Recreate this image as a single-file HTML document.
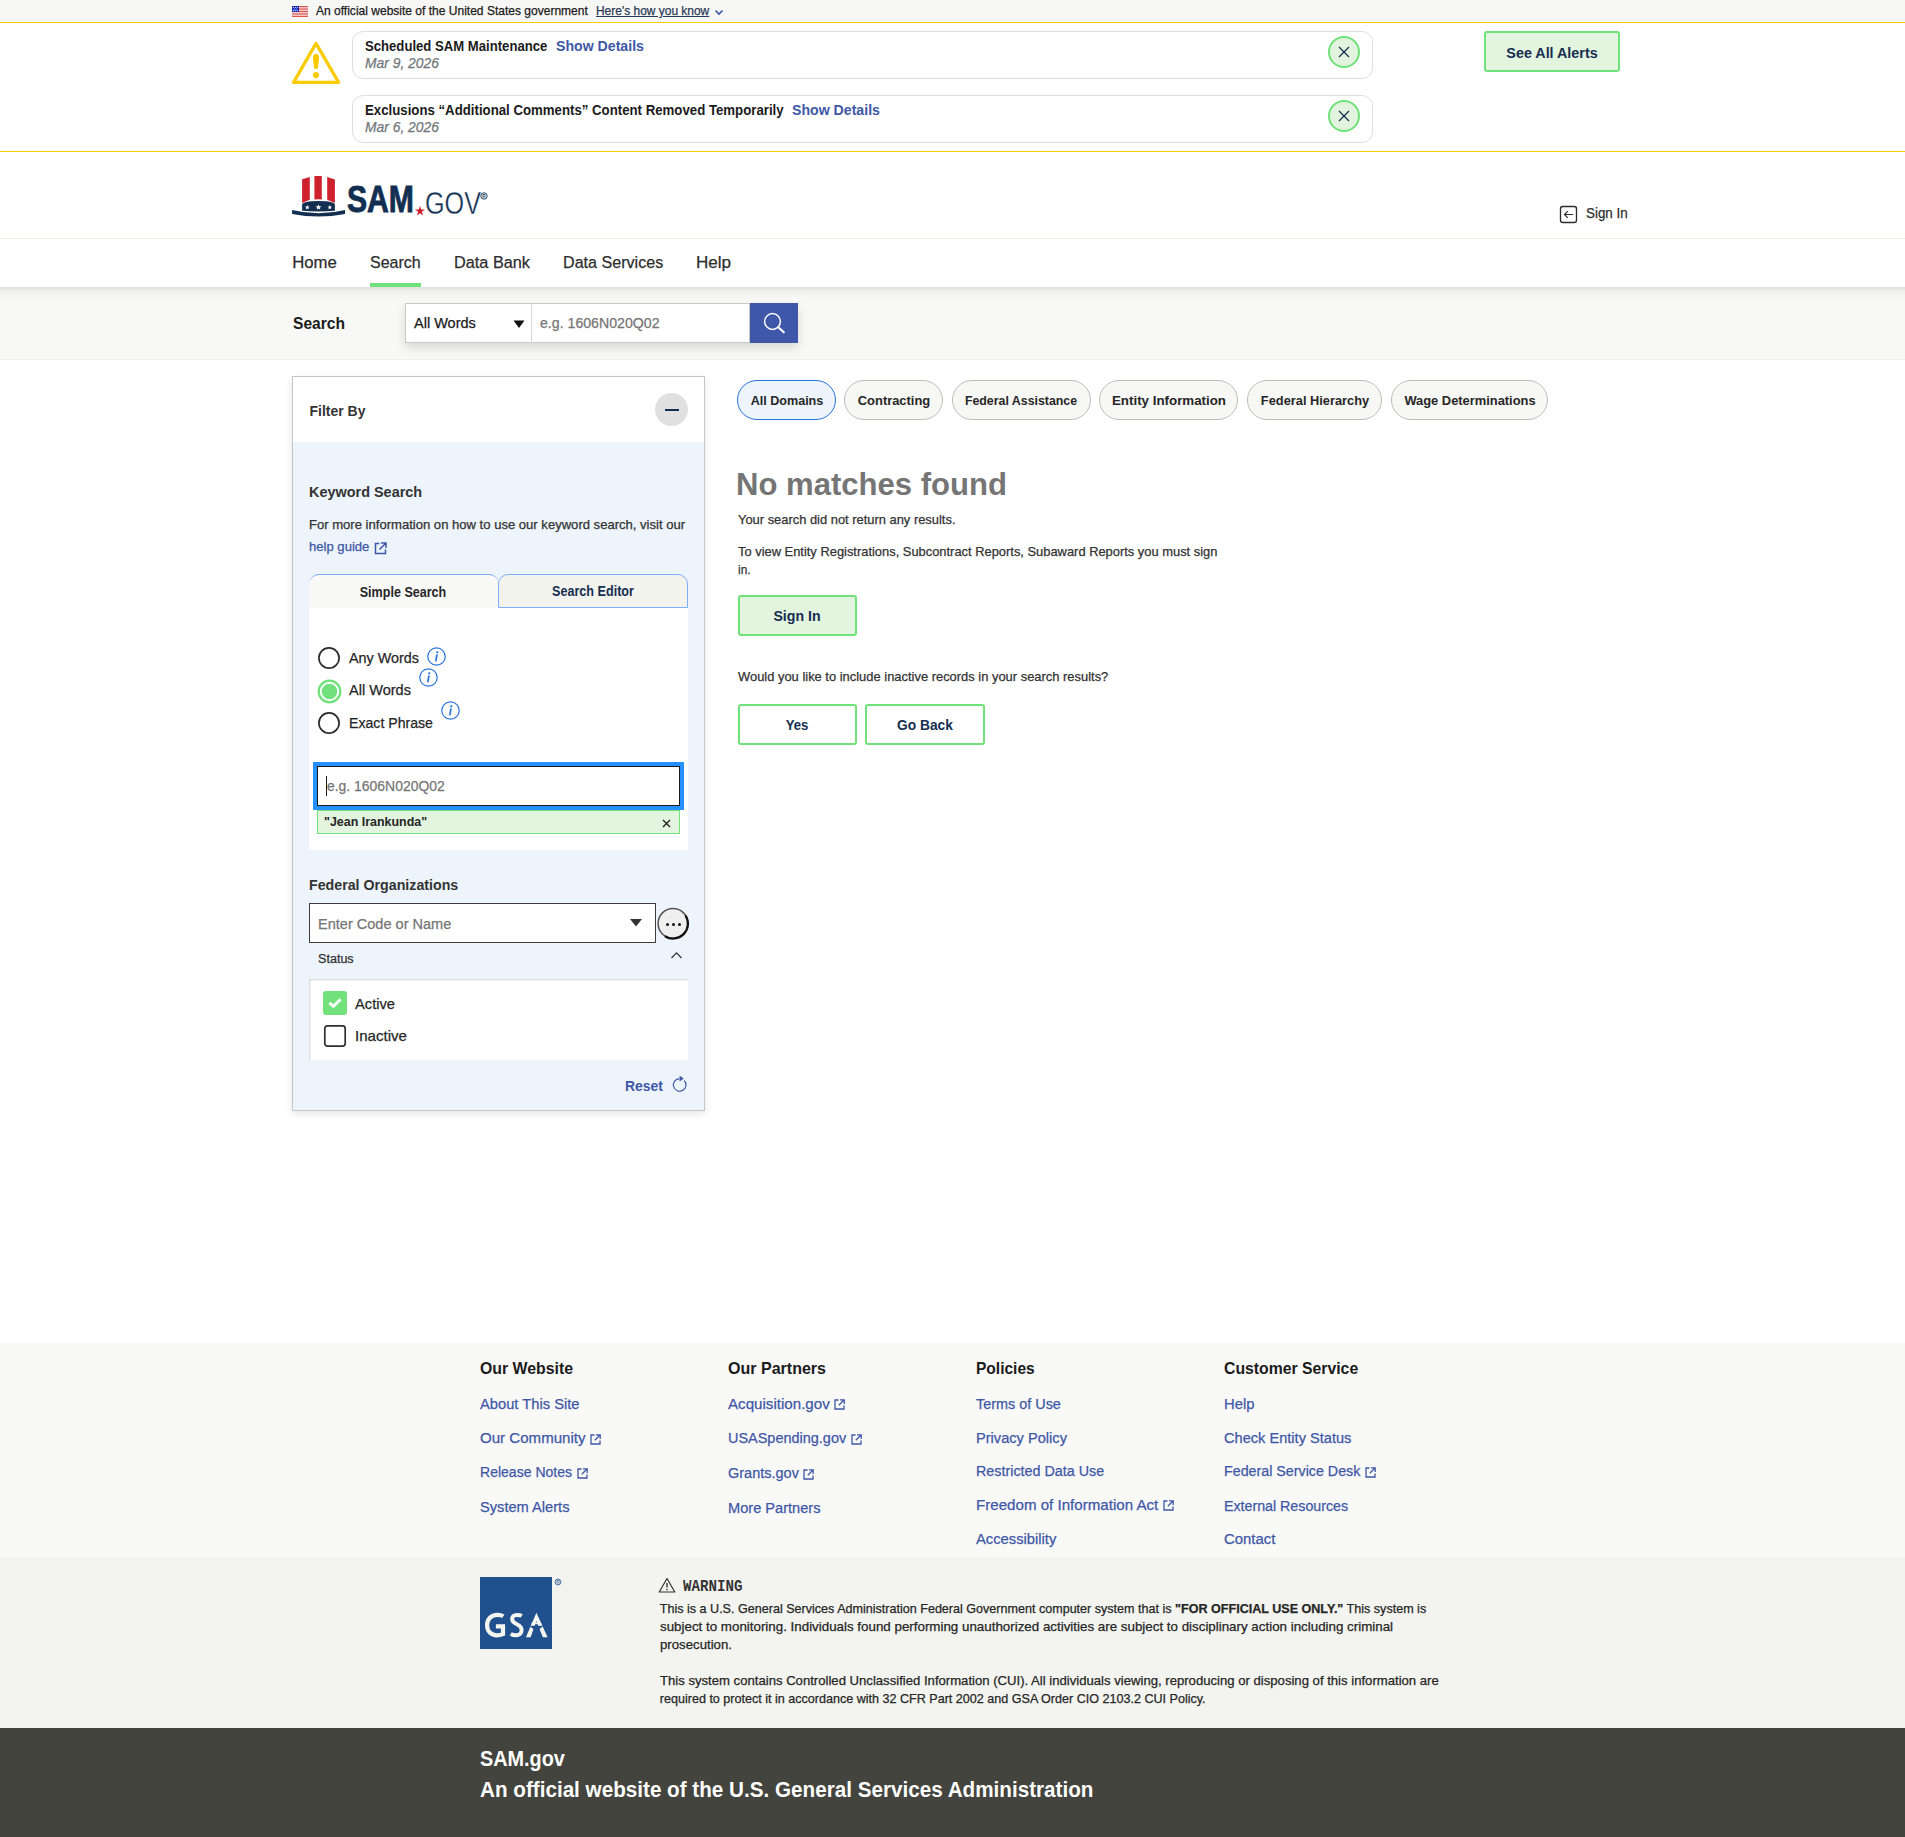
<!DOCTYPE html>
<html><head><meta charset="utf-8"><title>SAM.gov Search</title>
<style>
html,body{margin:0;padding:0;background:#fff;}
body{position:relative;width:1905px;height:1837px;overflow:hidden;font-family:"Liberation Sans",sans-serif;}
.t{position:absolute;white-space:nowrap;font-family:"Liberation Sans",sans-serif;-webkit-text-stroke:0.25px currentColor;}
.b{position:absolute;}
b{font-weight:bold;}
</style></head><body>
<div class="b" style="left:0px;top:0px;width:1905px;height:22px;background:#f7f7f5"></div>
<div class="b" style="left:0px;top:22px;width:1905px;height:1px;background:#f9cb00"></div>
<svg class="b" style="left:292px;top:6px" width="16" height="11" viewBox="0 0 16 11"><rect width="16" height="11" fill="#fff"/><rect y="0.00" width="16" height="0.85" fill="#d83933"/><rect y="1.69" width="16" height="0.85" fill="#d83933"/><rect y="3.38" width="16" height="0.85" fill="#d83933"/><rect y="5.07" width="16" height="0.85" fill="#d83933"/><rect y="6.76" width="16" height="0.85" fill="#d83933"/><rect y="8.45" width="16" height="0.85" fill="#d83933"/><rect y="10.14" width="16" height="0.85" fill="#d83933"/><rect width="7" height="6" fill="#0b1fb5"/><circle cx="1.3" cy="1.3" r="0.6" fill="#fff"/><circle cx="3.3" cy="1.3" r="0.6" fill="#fff"/><circle cx="5.3" cy="1.3" r="0.6" fill="#fff"/><circle cx="2.3" cy="3" r="0.6" fill="#fff"/><circle cx="4.3" cy="3" r="0.6" fill="#fff"/><circle cx="1.3" cy="4.7" r="0.6" fill="#fff"/><circle cx="3.3" cy="4.7" r="0.6" fill="#fff"/><circle cx="5.3" cy="4.7" r="0.6" fill="#fff"/></svg>
<div class="t" style="left:316px;top:3.31px;font-size:12.43px;line-height:16.16px;font-weight:normal;color:#1b1b1b;font-style:normal;transform:scaleX(0.9680);transform-origin:left;">An official website of the United States government</div>
<div class="t" style="left:595.7px;top:3.31px;font-size:12.43px;line-height:16.16px;font-weight:normal;color:#2b3a55;font-style:normal;transform:scaleX(0.9608);transform-origin:left;text-decoration:underline;">Here’s how you know</div>
<svg class="b" style="left:714px;top:8px" width="10" height="8" viewBox="0 0 10 8"><path d="M1.5 2.5 L5 6 L8.5 2.5" fill="none" stroke="#3e57a6" stroke-width="1.6"/></svg>
<div class="b" style="left:0px;top:151px;width:1905px;height:1px;background:#f9cb00"></div>
<svg class="b" style="left:292px;top:41px" width="49" height="44" viewBox="0 0 49 44"><path d="M24 2.4 L46.6 41.4 L1.6 41.4 Z" fill="none" stroke="#f9cb00" stroke-width="3.2" stroke-linejoin="round"/><path d="M20.9 17.3 Q20.9 12.8 24 12.8 Q27.1 12.8 27.1 17.3 L26 26.4 Q25.8 28.1 24 28.1 Q22.2 28.1 22 26.4 Z" fill="#f9cb00"/><circle cx="23.95" cy="34.05" r="3.1" fill="#f9cb00"/></svg>
<div class="b" style="left:352px;top:31px;width:1021px;height:48px;box-sizing:border-box;border:1px solid #dcdee0;border-radius:11px;background:#fff"></div>
<div class="t" style="left:365px;top:37.08px;font-size:13.966px;line-height:18.16px;font-weight:bold;color:#1b1b1b;font-style:normal;-webkit-text-stroke:0;transform:scaleX(0.9406);transform-origin:left;">Scheduled SAM Maintenance</div>
<div class="t" style="left:556px;top:37.08px;font-size:13.966px;line-height:18.16px;font-weight:bold;color:#3e57a6;font-style:normal;-webkit-text-stroke:0;transform:scaleX(1.0124);transform-origin:left;">Show Details</div>
<div class="t" style="left:365px;top:54.47px;font-size:14.385px;line-height:18.7px;font-weight:normal;color:#71767a;font-style:italic;transform:scaleX(0.9639);transform-origin:left;">Mar 9, 2026</div>
<div class="b" style="left:1328px;top:36px;width:32px;height:32px;box-sizing:border-box;border:2px solid #70e17b;border-radius:50%;background:#e3f4df"></div>
<svg class="b" style="left:1338px;top:46px" width="12" height="12" viewBox="0 0 12 12"><path d="M1 1 L11 11 M11 1 L1 11" stroke="#162e51" stroke-width="1.3"/></svg>
<div class="b" style="left:352px;top:95px;width:1021px;height:48px;box-sizing:border-box;border:1px solid #dcdee0;border-radius:11px;background:#fff"></div>
<div class="t" style="left:365px;top:101.08px;font-size:13.966px;line-height:18.16px;font-weight:bold;color:#1b1b1b;font-style:normal;-webkit-text-stroke:0;transform:scaleX(0.9478);transform-origin:left;">Exclusions “Additional Comments” Content Removed Temporarily</div>
<div class="t" style="left:792.3px;top:101.08px;font-size:13.966px;line-height:18.16px;font-weight:bold;color:#3e57a6;font-style:normal;-webkit-text-stroke:0;transform:scaleX(1.0124);transform-origin:left;">Show Details</div>
<div class="t" style="left:365px;top:118.47px;font-size:14.385px;line-height:18.7px;font-weight:normal;color:#71767a;font-style:italic;transform:scaleX(0.9639);transform-origin:left;">Mar 6, 2026</div>
<div class="b" style="left:1328px;top:100px;width:32px;height:32px;box-sizing:border-box;border:2px solid #70e17b;border-radius:50%;background:#e3f4df"></div>
<svg class="b" style="left:1338px;top:110px" width="12" height="12" viewBox="0 0 12 12"><path d="M1 1 L11 11 M11 1 L1 11" stroke="#162e51" stroke-width="1.3"/></svg>
<div class="b" style="left:1484px;top:31px;width:136px;height:41px;box-sizing:border-box;border:2px solid #70e17b;border-radius:3px;background:#e3f4df"></div>
<div class="t" style="left:1152.2px;width:800px;text-align:center;top:43.73px;font-size:14.525px;line-height:18.88px;font-weight:bold;color:#162e51;font-style:normal;-webkit-text-stroke:0;transform:scaleX(0.9863);transform-origin:center;">See All Alerts</div>
<div class="b" style="left:0px;top:238px;width:1905px;height:1px;background:#f0f0ea"></div>
<svg class="b" style="left:292px;top:175px" width="54" height="42" viewBox="0 0 54 42"><path d="M10.1 4.2 L17.8 2.0 L17.8 24.7 L10.1 27.9 Z" fill="#cf202e"/><path d="M22.4 1.1 L29.8 1.1 L29.8 24.4 Q26.1 24.1 22.4 24.4 Z" fill="#cf202e"/><path d="M35.2 2.0 L42.9 4.6 L42.9 27.9 L35.2 24.7 Z" fill="#cf202e"/><path d="M10.1 29.8 Q10.8 26.1 26.5 26.1 Q42.2 26.1 42.9 29.8 L42.9 35.7 Q26.5 37.2 10.1 35.7 Z" fill="#122f52"/><polygon points="15.30,29.90 15.92,31.55 17.68,31.63 16.30,32.72 16.77,34.42 15.30,33.45 13.83,34.42 14.30,32.72 12.92,31.63 14.68,31.55" fill="#fff"/><polygon points="26.50,29.20 27.27,31.25 29.45,31.34 27.74,32.70 28.32,34.81 26.50,33.60 24.68,34.81 25.26,32.70 23.55,31.34 25.73,31.25" fill="#fff"/><polygon points="37.80,30.00 38.39,31.58 40.08,31.66 38.76,32.71 39.21,34.34 37.80,33.41 36.39,34.34 36.84,32.71 35.52,31.66 37.21,31.58" fill="#fff"/><path d="M0.1 34.9 Q26.5 41.5 53 34.9 L53 38.9 Q26.5 44 0.1 38.9 Z" fill="#122f52"/></svg>
<div class="t" style="left:347px;top:175.12px;font-size:37.709px;line-height:49.02px;font-weight:bold;color:#122f52;font-style:normal;-webkit-text-stroke:0;transform:scaleX(0.7995);transform-origin:left;-webkit-text-stroke:0.9px #122f52;">SAM</div>
<svg class="b" style="left:414.5px;top:205.5px" width="10" height="10" viewBox="0 0 10 10"><polygon points="5,0 6.2,3.6 10,3.6 6.9,5.8 8.1,9.5 5,7.2 1.9,9.5 3.1,5.8 0,3.6 3.8,3.6" fill="#cf202e"/></svg>
<div class="t" style="left:424.5px;top:182.55px;font-size:31.564px;line-height:41.03px;font-weight:normal;color:#122f52;font-style:normal;transform:scaleX(0.7982);transform-origin:left;-webkit-text-stroke:0.35px #fff;">GOV</div>
<svg class="b" style="left:480px;top:192px" width="8" height="8" viewBox="0 0 8 8"><circle cx="4" cy="4" r="3.2" fill="none" stroke="#122f52" stroke-width="0.9"/><text x="4" y="5.6" font-size="4.6" text-anchor="middle" fill="#122f52" font-family="Liberation Sans" font-weight="bold">R</text></svg>
<svg class="b" style="left:1559px;top:205px" width="19" height="19" viewBox="0 0 19 19"><rect x="1.5" y="1.5" width="16" height="16" rx="2.2" fill="none" stroke="#2d2d2d" stroke-width="1.35"/><path d="M14.2 9.5 H5.5 M8.8 6.2 L5.5 9.5 L8.8 12.8" fill="none" stroke="#2d2d2d" stroke-width="1.2"/></svg>
<div class="t" style="left:1586px;top:203.07px;font-size:15.084px;line-height:19.61px;font-weight:normal;color:#2d2d2d;font-style:normal;transform:scaleX(0.8859);transform-origin:left;">Sign In</div>
<div class="t" style="left:292.2px;top:252.10px;font-size:16.76px;line-height:21.79px;font-weight:normal;color:#2e2e2e;font-style:normal;">Home</div>
<div class="t" style="left:370px;top:252.10px;font-size:16.76px;line-height:21.79px;font-weight:normal;color:#2e2e2e;font-style:normal;transform:scaleX(0.9547);transform-origin:left;">Search</div>
<div class="t" style="left:454px;top:252.10px;font-size:16.76px;line-height:21.79px;font-weight:normal;color:#2e2e2e;font-style:normal;transform:scaleX(0.9711);transform-origin:left;">Data Bank</div>
<div class="t" style="left:562.7px;top:252.10px;font-size:16.76px;line-height:21.79px;font-weight:normal;color:#2e2e2e;font-style:normal;transform:scaleX(0.9614);transform-origin:left;">Data Services</div>
<div class="t" style="left:695.5px;top:252.10px;font-size:16.76px;line-height:21.79px;font-weight:normal;color:#2e2e2e;font-style:normal;transform:scaleX(1.0183);transform-origin:left;">Help</div>
<div class="b" style="left:370px;top:283px;width:51px;height:4px;background:#70e17b"></div>
<div class="b" style="left:0px;top:287px;width:1905px;height:72px;background:linear-gradient(to bottom,#dfdfdd 0px,#ebebe9 3px,#f4f4f2 7px,#f8f8f6 13px,#f8f8f6 100%)"></div>
<div class="b" style="left:0px;top:359px;width:1905px;height:1px;background:#f0f0eb"></div>
<div class="t" style="left:292.7px;top:312.59px;font-size:16.061px;line-height:20.88px;font-weight:bold;color:#1b1b1b;font-style:normal;-webkit-text-stroke:0;transform:scaleX(0.9706);transform-origin:left;">Search</div>
<div class="b" style="left:405px;top:303px;width:393px;height:40px;box-shadow:0 5px 10px rgba(0,0,0,0.13)"></div>
<div class="b" style="left:405px;top:303px;width:127px;height:40px;box-sizing:border-box;border:1px solid #c9c9c9;background:#fff"></div>
<div class="t" style="left:414px;top:313.99px;font-size:14.665px;line-height:19.06px;font-weight:normal;color:#1b1b1b;font-style:normal;transform:scaleX(0.9908);transform-origin:left;">All Words</div>
<svg class="b" style="left:513px;top:320px" width="12" height="9" viewBox="0 0 12 9"><path d="M0.5 0.5 H11.5 L6 8 Z" fill="#111"/></svg>
<div class="b" style="left:531px;top:303px;width:219px;height:40px;box-sizing:border-box;border:1px solid #c9c9c9;border-left:1px solid #d6d6d6;background:#fff"></div>
<div class="t" style="left:540.4px;top:314.19px;font-size:14.665px;line-height:19.06px;font-weight:normal;color:#757575;font-style:normal;transform:scaleX(0.9650);transform-origin:left;">e.g. 1606N020Q02</div>
<div class="b" style="left:750px;top:303px;width:48px;height:40px;background:#3f57a8"></div>
<svg class="b" style="left:760px;top:309px" width="28" height="28" viewBox="0 0 28 28"><circle cx="12.5" cy="12.5" r="7.9" fill="none" stroke="#fff" stroke-width="1.5"/><path d="M18.3 18.3 L23.8 23.3" stroke="#fff" stroke-width="2.2" stroke-linecap="round"/></svg>
<div class="b" style="left:292px;top:376px;width:413px;height:735px;box-sizing:border-box;border:1px solid #c6c6c6;background:#edf4fb;box-shadow:0 3px 8px rgba(0,0,0,0.10)"></div>
<div class="b" style="left:293px;top:377px;width:411px;height:65px;background:#fff"></div>
<div class="t" style="left:309.6px;top:402.08px;font-size:13.966px;line-height:18.16px;font-weight:bold;color:#333333;font-style:normal;-webkit-text-stroke:0;">Filter By</div>
<div class="b" style="left:655px;top:393px;width:33px;height:33px;border-radius:50%;background:#e0e0e0"></div>
<div class="b" style="left:665px;top:409px;width:14px;height:1.5px;background:#112e51"></div>
<div class="t" style="left:309.4px;top:483.23px;font-size:14.525px;line-height:18.88px;font-weight:bold;color:#333333;font-style:normal;-webkit-text-stroke:0;transform:scaleX(0.9945);transform-origin:left;">Keyword Search</div>
<div class="t" style="left:309.4px;top:518.35px;font-size:12.291px;line-height:15.98px;font-weight:normal;color:#333333;font-style:normal;transform:scaleX(1.0637);transform-origin:left;">For more information on how to use our keyword search, visit our</div>
<div class="t" style="left:309.4px;top:540.35px;font-size:12.291px;line-height:15.98px;font-weight:normal;color:#3e57a6;font-style:normal;transform:scaleX(1.0648);transform-origin:left;">help guide</div>
<svg class="b" style="left:374px;top:542px" width="14" height="13" viewBox="0 0 14 13"><path d="M5.5 1.5 H1.5 V11.5 H11.5 V7.5" fill="none" stroke="#3e57a6" stroke-width="1.5"/><path d="M7 1 H12 V6 M12 1 L5.5 7.5" fill="none" stroke="#3e57a6" stroke-width="1.5"/></svg>
<div class="b" style="left:309px;top:608px;width:379px;height:242px;background:#fff"></div>
<div class="b" style="left:309px;top:574px;width:190px;height:34px;box-sizing:border-box;border-top:1px solid #7eaef8;border-radius:10px 10px 0 0;background:#f9f9f7"></div>
<div class="b" style="left:498px;top:574px;width:190px;height:34px;box-sizing:border-box;border:1px solid #7eaef8;border-radius:10px 10px 0 0;background:#f3f3ee"></div>
<div class="t" style="left:3.1000000000000227px;width:800px;text-align:center;top:583.08px;font-size:13.966px;line-height:18.16px;font-weight:bold;color:#262626;font-style:normal;-webkit-text-stroke:0;transform:scaleX(0.8997);transform-origin:center;">Simple Search</div>
<div class="t" style="left:193px;width:800px;text-align:center;top:582.08px;font-size:13.966px;line-height:18.16px;font-weight:bold;color:#162e51;font-style:normal;-webkit-text-stroke:0;transform:scaleX(0.9030);transform-origin:center;">Search Editor</div>
<svg class="b" style="left:317px;top:646px" width="24" height="24" viewBox="0 0 24 24"><circle cx="12" cy="12" r="10.1" fill="#fff" stroke="#2b2b2b" stroke-width="1.7"/></svg>
<div class="t" style="left:349.2px;top:647.99px;font-size:15.363px;line-height:19.97px;font-weight:normal;color:#262626;font-style:normal;transform:scaleX(0.9352);transform-origin:left;">Any Words</div>
<svg class="b" style="left:426.5px;top:646.5px" width="19" height="19" viewBox="0 0 19 19"><circle cx="9.5" cy="9.5" r="8.7" fill="none" stroke="#2672de" stroke-width="1.2"/><circle cx="10.3" cy="5.3" r="1.15" fill="#2672de"/><path d="M9.9 8 L8.9 13.6" stroke="#2672de" stroke-width="1.7" stroke-linecap="round"/></svg>
<svg class="b" style="left:317px;top:679.0px" width="25" height="25" viewBox="0 0 25 25"><circle cx="12.5" cy="12.5" r="10.8" fill="#fff" stroke="#70e17b" stroke-width="2.2"/><circle cx="12.5" cy="12.5" r="7.8" fill="#70e17b"/></svg>
<div class="t" style="left:349.2px;top:680.49px;font-size:15.363px;line-height:19.97px;font-weight:normal;color:#262626;font-style:normal;transform:scaleX(0.9473);transform-origin:left;">All Words</div>
<svg class="b" style="left:418.5px;top:667.5px" width="19" height="19" viewBox="0 0 19 19"><circle cx="9.5" cy="9.5" r="8.7" fill="none" stroke="#2672de" stroke-width="1.2"/><circle cx="10.3" cy="5.3" r="1.15" fill="#2672de"/><path d="M9.9 8 L8.9 13.6" stroke="#2672de" stroke-width="1.7" stroke-linecap="round"/></svg>
<svg class="b" style="left:317px;top:711px" width="24" height="24" viewBox="0 0 24 24"><circle cx="12" cy="12" r="10.1" fill="#fff" stroke="#2b2b2b" stroke-width="1.7"/></svg>
<div class="t" style="left:349.2px;top:712.99px;font-size:15.363px;line-height:19.97px;font-weight:normal;color:#262626;font-style:normal;transform:scaleX(0.9193);transform-origin:left;">Exact Phrase</div>
<svg class="b" style="left:440.5px;top:700.5px" width="19" height="19" viewBox="0 0 19 19"><circle cx="9.5" cy="9.5" r="8.7" fill="none" stroke="#2672de" stroke-width="1.2"/><circle cx="10.3" cy="5.3" r="1.15" fill="#2672de"/><path d="M9.9 8 L8.9 13.6" stroke="#2672de" stroke-width="1.7" stroke-linecap="round"/></svg>
<div class="b" style="left:313px;top:762px;width:371px;height:48px;background:#2491ff"></div>
<div class="b" style="left:317px;top:766px;width:363px;height:40px;box-sizing:border-box;border:1px solid #1b1b1b;background:#fff"></div>
<div class="b" style="left:326px;top:776px;width:1.3px;height:20px;background:#1b1b1b"></div>
<div class="t" style="left:327px;top:776.99px;font-size:14.665px;line-height:19.06px;font-weight:normal;color:#757575;font-style:normal;transform:scaleX(0.9505);transform-origin:left;">e.g. 1606N020Q02</div>
<div class="b" style="left:317px;top:810px;width:363px;height:24px;box-sizing:border-box;border:1px solid #70e17b;background:#e3f4df"></div>
<div class="t" style="left:323.5px;top:813.95px;font-size:12.989px;line-height:16.89px;font-weight:bold;color:#262626;font-style:normal;-webkit-text-stroke:0;transform:scaleX(0.9600);transform-origin:left;">"Jean Irankunda"</div>
<svg class="b" style="left:662px;top:819px" width="9" height="9" viewBox="0 0 9 9"><path d="M1 1 L8 8 M8 1 L1 8" stroke="#1b1b1b" stroke-width="1.3"/></svg>
<div class="t" style="left:309.4px;top:874.97px;font-size:15.084px;line-height:19.61px;font-weight:bold;color:#333333;font-style:normal;-webkit-text-stroke:0;transform:scaleX(0.9424);transform-origin:left;">Federal Organizations</div>
<div class="b" style="left:309px;top:903px;width:347px;height:40px;box-sizing:border-box;border:1px solid #3d3d3d;background:#fff"></div>
<div class="t" style="left:318.4px;top:913.69px;font-size:15.363px;line-height:19.97px;font-weight:normal;color:#757575;font-style:normal;transform:scaleX(0.9461);transform-origin:left;">Enter Code or Name</div>
<svg class="b" style="left:629px;top:918px" width="14" height="10" viewBox="0 0 14 10"><path d="M1 1 H13 L7 8.5 Z" fill="#333"/></svg>
<svg class="b" style="left:655.5px;top:905.5px" width="34" height="35" viewBox="0 0 34 35"><circle cx="17" cy="17.4" r="14.9" fill="#efefef" stroke="#555" stroke-width="1.5"/><path d="M29.5 9.5 A14.9 14.9 0 0 1 9 30.2" fill="none" stroke="#111" stroke-width="2.2"/></svg>
<div class="b" style="left:666.0px;top:922.5px;width:3px;height:3px;border-radius:50%;background:#111"></div>
<div class="b" style="left:671.7px;top:922.5px;width:3px;height:3px;border-radius:50%;background:#111"></div>
<div class="b" style="left:677.5px;top:922.5px;width:3px;height:3px;border-radius:50%;background:#111"></div>
<div class="t" style="left:317.7px;top:951.87px;font-size:11.872px;line-height:15.43px;font-weight:normal;color:#333333;font-style:normal;transform:scaleX(1.0607);transform-origin:left;">Status</div>
<svg class="b" style="left:670px;top:950px" width="13" height="10" viewBox="0 0 13 10"><path d="M1.5 8 L6.5 2.8 L11.5 8" fill="none" stroke="#333" stroke-width="1.2"/></svg>
<div class="b" style="left:309px;top:979px;width:379px;height:81px;background:#fff;box-shadow:inset 1px 1px 2px rgba(0,0,0,0.18)"></div>
<div class="b" style="left:323px;top:991px;width:24px;height:24px;border-radius:3px;background:#70e17b"></div>
<svg class="b" style="left:323px;top:991px" width="24" height="24" viewBox="0 0 24 24"><path d="M6.4 11.8 L10.5 15.3 L17.6 8.2" fill="none" stroke="#fff" stroke-width="3"/></svg>
<div class="t" style="left:355px;top:994.11px;font-size:14.944px;line-height:19.43px;font-weight:normal;color:#262626;font-style:normal;transform:scaleX(0.9829);transform-origin:left;">Active</div>
<svg class="b" style="left:323px;top:1024px" width="24" height="24" viewBox="0 0 24 24"><rect x="1.8" y="1.8" width="20.4" height="20.4" rx="2.6" fill="#fff" stroke="#2f2f2f" stroke-width="1.7"/></svg>
<div class="t" style="left:355px;top:1025.91px;font-size:14.944px;line-height:19.43px;font-weight:normal;color:#262626;font-style:normal;transform:scaleX(1.0096);transform-origin:left;">Inactive</div>
<div class="t" style="left:624.5px;top:1076.98px;font-size:13.966px;line-height:18.16px;font-weight:bold;color:#3e57a6;font-style:normal;-webkit-text-stroke:0;transform:scaleX(0.9937);transform-origin:left;">Reset</div>
<svg class="b" style="left:671px;top:1074px" width="18" height="19" viewBox="0 0 18 19"><path d="M13.2 6.5 A6.3 6.3 0 1 1 8.5 4.6" fill="none" stroke="#3e57a6" stroke-width="1.15"/><path d="M8.6 1.8 L12.8 4.6 L8.6 7.4 Z" fill="#3e57a6"/></svg>
<div class="b" style="left:737px;top:380px;width:99px;height:39.5px;box-sizing:border-box;border:1px solid #2672de;border-radius:20px;background:#edf4fb"></div>
<div class="t" style="left:386.5px;width:800px;text-align:center;top:392.65px;font-size:12.989px;line-height:16.89px;font-weight:bold;color:#262626;font-style:normal;-webkit-text-stroke:0;transform:scaleX(0.9685);transform-origin:center;">All Domains</div>
<div class="b" style="left:844px;top:380px;width:99px;height:39.5px;box-sizing:border-box;border:1px solid #bdbdbd;border-radius:20px;background:#f7f7f5"></div>
<div class="t" style="left:493.5px;width:800px;text-align:center;top:392.65px;font-size:12.989px;line-height:16.89px;font-weight:bold;color:#262626;font-style:normal;-webkit-text-stroke:0;transform:scaleX(0.9948);transform-origin:center;">Contracting</div>
<div class="b" style="left:951.5px;top:380px;width:139.0px;height:39.5px;box-sizing:border-box;border:1px solid #bdbdbd;border-radius:20px;background:#f7f7f5"></div>
<div class="t" style="left:621.0px;width:800px;text-align:center;top:392.65px;font-size:12.989px;line-height:16.89px;font-weight:bold;color:#262626;font-style:normal;-webkit-text-stroke:0;transform:scaleX(0.9532);transform-origin:center;">Federal Assistance</div>
<div class="b" style="left:1099px;top:380px;width:139px;height:39.5px;box-sizing:border-box;border:1px solid #bdbdbd;border-radius:20px;background:#f7f7f5"></div>
<div class="t" style="left:768.5px;width:800px;text-align:center;top:392.65px;font-size:12.989px;line-height:16.89px;font-weight:bold;color:#262626;font-style:normal;-webkit-text-stroke:0;transform:scaleX(1.0277);transform-origin:center;">Entity Information</div>
<div class="b" style="left:1247px;top:380px;width:135px;height:39.5px;box-sizing:border-box;border:1px solid #bdbdbd;border-radius:20px;background:#f7f7f5"></div>
<div class="t" style="left:914.5px;width:800px;text-align:center;top:392.65px;font-size:12.989px;line-height:16.89px;font-weight:bold;color:#262626;font-style:normal;-webkit-text-stroke:0;transform:scaleX(0.9878);transform-origin:center;">Federal Hierarchy</div>
<div class="b" style="left:1391px;top:380px;width:157px;height:39.5px;box-sizing:border-box;border:1px solid #bdbdbd;border-radius:20px;background:#f7f7f5"></div>
<div class="t" style="left:1069.5px;width:800px;text-align:center;top:392.65px;font-size:12.989px;line-height:16.89px;font-weight:bold;color:#262626;font-style:normal;-webkit-text-stroke:0;transform:scaleX(0.9931);transform-origin:center;">Wage Determinations</div>
<div class="t" style="left:736px;top:464.66px;font-size:30.447px;line-height:39.58px;font-weight:bold;color:#757575;font-style:normal;-webkit-text-stroke:0;transform:scaleX(1.0204);transform-origin:left;">No matches found</div>
<div class="t" style="left:737.7px;top:511.77px;font-size:12.57px;line-height:16.34px;font-weight:normal;color:#333333;font-style:normal;transform:scaleX(1.0267);transform-origin:left;">Your search did not return any results.</div>
<div class="t" style="left:737.7px;top:543.97px;font-size:12.57px;line-height:16.34px;font-weight:normal;color:#333333;font-style:normal;transform:scaleX(1.0263);transform-origin:left;">To view Entity Registrations, Subcontract Reports, Subaward Reports you must sign</div>
<div class="t" style="left:737.7px;top:561.67px;font-size:12.57px;line-height:16.34px;font-weight:normal;color:#333333;font-style:normal;transform:scaleX(0.9415);transform-origin:left;">in.</div>
<div class="b" style="left:737.5px;top:594.5px;width:119.5px;height:41px;box-sizing:border-box;border:2px solid #70e17b;border-radius:3px;background:#e3f4df"></div>
<div class="t" style="left:397.4px;width:800px;text-align:center;top:606.93px;font-size:14.525px;line-height:18.88px;font-weight:bold;color:#162e51;font-style:normal;-webkit-text-stroke:0;transform:scaleX(0.9749);transform-origin:center;">Sign In</div>
<div class="t" style="left:737.7px;top:669.47px;font-size:12.57px;line-height:16.34px;font-weight:normal;color:#333333;font-style:normal;transform:scaleX(1.0284);transform-origin:left;">Would you like to include inactive records in your search results?</div>
<div class="b" style="left:737.5px;top:703.5px;width:119.5px;height:41px;box-sizing:border-box;border:2px solid #70e17b;border-radius:3px;background:#fff"></div>
<div class="t" style="left:397.29999999999995px;width:800px;text-align:center;top:716.03px;font-size:14.525px;line-height:18.88px;font-weight:bold;color:#162e51;font-style:normal;-webkit-text-stroke:0;transform:scaleX(0.9064);transform-origin:center;">Yes</div>
<div class="b" style="left:865px;top:703.5px;width:120px;height:41px;box-sizing:border-box;border:2px solid #70e17b;border-radius:3px;background:#fff"></div>
<div class="t" style="left:525.4px;width:800px;text-align:center;top:716.03px;font-size:14.525px;line-height:18.88px;font-weight:bold;color:#162e51;font-style:normal;-webkit-text-stroke:0;transform:scaleX(0.9486);transform-origin:center;">Go Back</div>
<div class="b" style="left:0px;top:1343px;width:1905px;height:214px;background:#f9f9f7"></div>
<div class="t" style="left:480px;top:1359.02px;font-size:15.642px;line-height:20.33px;font-weight:bold;color:#1b1b1b;font-style:normal;-webkit-text-stroke:0;transform:scaleX(1.0147);transform-origin:left;">Our Website</div>
<div class="t" style="left:480px;top:1393.83px;font-size:15.223px;line-height:19.79px;font-weight:normal;color:#3e57a6;font-style:normal;transform:scaleX(0.9664);transform-origin:left;">About This Site</div>
<div class="t" style="left:480px;top:1427.83px;font-size:15.223px;line-height:19.79px;font-weight:normal;color:#3e57a6;font-style:normal;transform:scaleX(0.9907);transform-origin:left;">Our Community</div>
<svg class="b" style="left:590.1px;top:1433.5px" width="11" height="11" viewBox="0 0 11 11"><path d="M4.5 1 H1 V10 H10 V6.5" fill="none" stroke="#3e57a6" stroke-width="1.3"/><path d="M6 0.8 H10.2 V5 M10.2 0.8 L4.8 6.2" fill="none" stroke="#3e57a6" stroke-width="1.3"/></svg>
<div class="t" style="left:480px;top:1462.23px;font-size:15.223px;line-height:19.79px;font-weight:normal;color:#3e57a6;font-style:normal;transform:scaleX(0.9223);transform-origin:left;">Release Notes</div>
<svg class="b" style="left:576.6px;top:1467.9px" width="11" height="11" viewBox="0 0 11 11"><path d="M4.5 1 H1 V10 H10 V6.5" fill="none" stroke="#3e57a6" stroke-width="1.3"/><path d="M6 0.8 H10.2 V5 M10.2 0.8 L4.8 6.2" fill="none" stroke="#3e57a6" stroke-width="1.3"/></svg>
<div class="t" style="left:480px;top:1497.23px;font-size:15.223px;line-height:19.79px;font-weight:normal;color:#3e57a6;font-style:normal;transform:scaleX(0.9618);transform-origin:left;">System Alerts</div>
<div class="t" style="left:728px;top:1359.02px;font-size:15.642px;line-height:20.33px;font-weight:bold;color:#1b1b1b;font-style:normal;-webkit-text-stroke:0;transform:scaleX(1.0259);transform-origin:left;">Our Partners</div>
<div class="t" style="left:728px;top:1393.63px;font-size:15.223px;line-height:19.79px;font-weight:normal;color:#3e57a6;font-style:normal;transform:scaleX(0.9942);transform-origin:left;">Acquisition.gov</div>
<svg class="b" style="left:834.3px;top:1399.3px" width="11" height="11" viewBox="0 0 11 11"><path d="M4.5 1 H1 V10 H10 V6.5" fill="none" stroke="#3e57a6" stroke-width="1.3"/><path d="M6 0.8 H10.2 V5 M10.2 0.8 L4.8 6.2" fill="none" stroke="#3e57a6" stroke-width="1.3"/></svg>
<div class="t" style="left:728px;top:1428.13px;font-size:15.223px;line-height:19.79px;font-weight:normal;color:#3e57a6;font-style:normal;transform:scaleX(0.9501);transform-origin:left;">USASpending.gov</div>
<svg class="b" style="left:850.7px;top:1433.8px" width="11" height="11" viewBox="0 0 11 11"><path d="M4.5 1 H1 V10 H10 V6.5" fill="none" stroke="#3e57a6" stroke-width="1.3"/><path d="M6 0.8 H10.2 V5 M10.2 0.8 L4.8 6.2" fill="none" stroke="#3e57a6" stroke-width="1.3"/></svg>
<div class="t" style="left:728px;top:1463.43px;font-size:15.223px;line-height:19.79px;font-weight:normal;color:#3e57a6;font-style:normal;transform:scaleX(0.9522);transform-origin:left;">Grants.gov</div>
<svg class="b" style="left:803.4px;top:1469.1px" width="11" height="11" viewBox="0 0 11 11"><path d="M4.5 1 H1 V10 H10 V6.5" fill="none" stroke="#3e57a6" stroke-width="1.3"/><path d="M6 0.8 H10.2 V5 M10.2 0.8 L4.8 6.2" fill="none" stroke="#3e57a6" stroke-width="1.3"/></svg>
<div class="t" style="left:728px;top:1498.03px;font-size:15.223px;line-height:19.79px;font-weight:normal;color:#3e57a6;font-style:normal;transform:scaleX(0.9591);transform-origin:left;">More Partners</div>
<div class="t" style="left:976.2px;top:1359.02px;font-size:15.642px;line-height:20.33px;font-weight:bold;color:#1b1b1b;font-style:normal;-webkit-text-stroke:0;transform:scaleX(0.9928);transform-origin:left;">Policies</div>
<div class="t" style="left:976.2px;top:1393.83px;font-size:15.223px;line-height:19.79px;font-weight:normal;color:#3e57a6;font-style:normal;transform:scaleX(0.9468);transform-origin:left;">Terms of Use</div>
<div class="t" style="left:976.2px;top:1427.83px;font-size:15.223px;line-height:19.79px;font-weight:normal;color:#3e57a6;font-style:normal;transform:scaleX(0.9605);transform-origin:left;">Privacy Policy</div>
<div class="t" style="left:976.2px;top:1460.83px;font-size:15.223px;line-height:19.79px;font-weight:normal;color:#3e57a6;font-style:normal;transform:scaleX(0.9419);transform-origin:left;">Restricted Data Use</div>
<div class="t" style="left:976.2px;top:1494.63px;font-size:15.223px;line-height:19.79px;font-weight:normal;color:#3e57a6;font-style:normal;transform:scaleX(0.9929);transform-origin:left;">Freedom of Information Act</div>
<svg class="b" style="left:1163.0px;top:1500.3px" width="11" height="11" viewBox="0 0 11 11"><path d="M4.5 1 H1 V10 H10 V6.5" fill="none" stroke="#3e57a6" stroke-width="1.3"/><path d="M6 0.8 H10.2 V5 M10.2 0.8 L4.8 6.2" fill="none" stroke="#3e57a6" stroke-width="1.3"/></svg>
<div class="t" style="left:976.2px;top:1529.43px;font-size:15.223px;line-height:19.79px;font-weight:normal;color:#3e57a6;font-style:normal;transform:scaleX(0.9686);transform-origin:left;">Accessibility</div>
<div class="t" style="left:1224.1px;top:1359.02px;font-size:15.642px;line-height:20.33px;font-weight:bold;color:#1b1b1b;font-style:normal;-webkit-text-stroke:0;transform:scaleX(1.0096);transform-origin:left;">Customer Service</div>
<div class="t" style="left:1224.1px;top:1393.83px;font-size:15.223px;line-height:19.79px;font-weight:normal;color:#3e57a6;font-style:normal;transform:scaleX(0.9709);transform-origin:left;">Help</div>
<div class="t" style="left:1224.1px;top:1427.83px;font-size:15.223px;line-height:19.79px;font-weight:normal;color:#3e57a6;font-style:normal;transform:scaleX(0.9590);transform-origin:left;">Check Entity Status</div>
<div class="t" style="left:1224.1px;top:1460.83px;font-size:15.223px;line-height:19.79px;font-weight:normal;color:#3e57a6;font-style:normal;transform:scaleX(0.9373);transform-origin:left;">Federal Service Desk</div>
<svg class="b" style="left:1365.0px;top:1466.5px" width="11" height="11" viewBox="0 0 11 11"><path d="M4.5 1 H1 V10 H10 V6.5" fill="none" stroke="#3e57a6" stroke-width="1.3"/><path d="M6 0.8 H10.2 V5 M10.2 0.8 L4.8 6.2" fill="none" stroke="#3e57a6" stroke-width="1.3"/></svg>
<div class="t" style="left:1224.1px;top:1495.53px;font-size:15.223px;line-height:19.79px;font-weight:normal;color:#3e57a6;font-style:normal;transform:scaleX(0.9342);transform-origin:left;">External Resources</div>
<div class="t" style="left:1224.1px;top:1529.43px;font-size:15.223px;line-height:19.79px;font-weight:normal;color:#3e57a6;font-style:normal;transform:scaleX(0.9797);transform-origin:left;">Contact</div>
<div class="b" style="left:0px;top:1557px;width:1905px;height:171px;background:#f3f4ef"></div>
<svg class="b" style="left:480px;top:1577px" width="72" height="72" viewBox="0 0 72 72"><rect width="72" height="72" fill="#21508f"/><path d="M23.3 39.2 C21.6 38.1 19.6 37.9 17.4 37.9 C11.2 37.9 7.1 42.3 7.1 48.2 C7.1 54.3 11.2 58.3 16.8 58.3 C19.4 58.3 21.3 57.8 23 57.1 L23 49.3 L15.9 49.3" fill="none" stroke="#f5f5f0" stroke-width="4.2"/><path d="M41.8 38.9 C40.2 37.9 38.6 37.9 36.9 37.9 C33.9 37.9 32.1 39.7 32.1 42.1 C32.1 44.9 34.5 46.2 36.9 47.3 C39.7 48.6 41.6 50.1 41.6 53.3 C41.6 56.6 39.2 58.3 36.2 58.3 C34.2 58.3 32.2 57.8 30.7 56.8" fill="none" stroke="#f5f5f0" stroke-width="4"/><path d="M56.4 35.8 L67.6 60.2 L62.9 60.2 L56.4 44.8 L50.6 60.2 L45.9 60.2 Z" fill="#f5f5f0"/><polygon points="56.40,44.00 58.16,48.77 63.25,48.98 59.25,52.13 60.63,57.02 56.40,54.20 52.17,57.02 53.55,52.13 49.55,48.98 54.64,48.77" fill="#21508f"/><path d="M51.3 47.2 L61.6 47.2 L61.0 45.6 L51.9 45.6 Z" fill="#f5f5f0"/></svg>
<svg class="b" style="left:553.5px;top:1577.5px" width="8" height="8" viewBox="0 0 8 8"><circle cx="4" cy="4" r="2.9" fill="none" stroke="#3b5f9a" stroke-width="0.9"/><path d="M3 5.8 V2.3 H4.4 Q5.4 2.3 5.4 3.3 Q5.4 4.2 4.3 4.2 L5.4 5.8" fill="none" stroke="#3b5f9a" stroke-width="0.8"/></svg>
<svg class="b" style="left:658px;top:1577px" width="18" height="16" viewBox="0 0 18 16"><path d="M9 1.5 L16.8 15 H1.2 Z" fill="none" stroke="#333" stroke-width="1.2" stroke-linejoin="round"/><path d="M9 6 V10.5" stroke="#333" stroke-width="1.4"/><circle cx="9" cy="12.6" r="0.8" fill="#333"/></svg>
<div class="t" style="left:683.4px;top:1575.92px;font-size:16.667px;line-height:21.67px;font-weight:bold;color:#333333;font-style:normal;font-family:'Liberation Mono';-webkit-text-stroke:0;transform:scaleX(0.8484);transform-origin:left;">WARNING</div>
<div class="t" style="left:659.8px;top:1601.47px;font-size:12.57px;line-height:16.34px;font-weight:normal;color:#262626;font-style:normal;">This is a U.S. General Services Administration Federal Government computer system that is <b>"FOR OFFICIAL USE ONLY."</b> This system is</div>
<div class="t" style="left:659.8px;top:1619.27px;font-size:12.57px;line-height:16.34px;font-weight:normal;color:#262626;font-style:normal;transform:scaleX(1.0626);transform-origin:left;">subject to monitoring. Individuals found performing unauthorized activities are subject to disciplinary action including criminal</div>
<div class="t" style="left:659.8px;top:1636.87px;font-size:12.57px;line-height:16.34px;font-weight:normal;color:#262626;font-style:normal;transform:scaleX(1.0514);transform-origin:left;">prosecution.</div>
<div class="t" style="left:659.8px;top:1673.17px;font-size:12.57px;line-height:16.34px;font-weight:normal;color:#262626;font-style:normal;transform:scaleX(1.0443);transform-origin:left;">This system contains Controlled Unclassified Information (CUI). All individuals viewing, reproducing or disposing of this information are</div>
<div class="t" style="left:659.8px;top:1691.27px;font-size:12.57px;line-height:16.34px;font-weight:normal;color:#262626;font-style:normal;">required to protect it in accordance with 32 CFR Part 2002 and GSA Order CIO 2103.2 CUI Policy.</div>
<div class="b" style="left:0px;top:1728px;width:1905px;height:109px;background:#44443e"></div>
<div class="t" style="left:480.2px;top:1745.15px;font-size:21.927px;line-height:28.51px;font-weight:bold;color:#fff;font-style:normal;-webkit-text-stroke:0;transform:scaleX(0.9061);transform-origin:left;">SAM.gov</div>
<div class="t" style="left:480px;top:1775.85px;font-size:21.927px;line-height:28.51px;font-weight:bold;color:#fff;font-style:normal;-webkit-text-stroke:0;transform:scaleX(0.9431);transform-origin:left;">An official website of the U.S. General Services Administration</div>
</body></html>
